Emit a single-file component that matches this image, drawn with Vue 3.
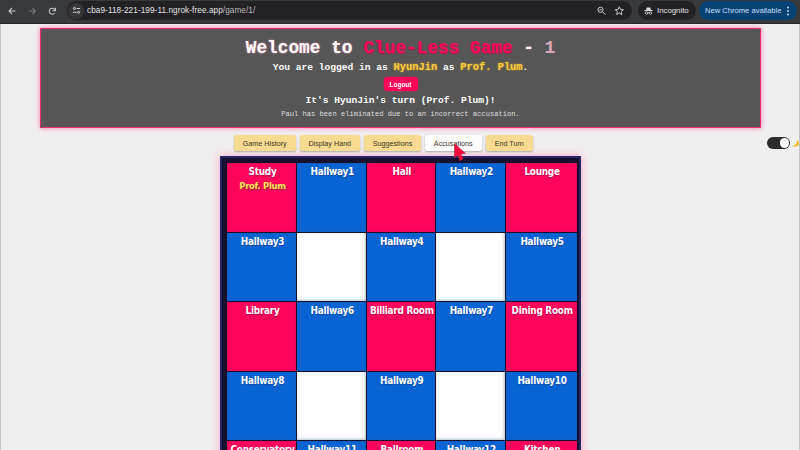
<script setup>
const actions = ['Game History', 'Display Hand', 'Suggestions', 'Accusations', 'End Turn']
const widths = [61.5, 60.5, 57, 56.5, 47.5]
const cells = [
  { n: 'Study', t: 'room', p: 'Prof. Plum' }, { n: 'Hallway1', t: 'hall' }, { n: 'Hall', t: 'room' }, { n: 'Hallway2', t: 'hall' }, { n: 'Lounge', t: 'room' },
  { n: 'Hallway3', t: 'hall' }, { n: '', t: 'blank' }, { n: 'Hallway4', t: 'hall' }, { n: '', t: 'blank' }, { n: 'Hallway5', t: 'hall' },
  { n: 'Library', t: 'room' }, { n: 'Hallway6', t: 'hall' }, { n: 'Billiard Room', t: 'room' }, { n: 'Hallway7', t: 'hall' }, { n: 'Dining Room', t: 'room' },
  { n: 'Hallway8', t: 'hall' }, { n: '', t: 'blank' }, { n: 'Hallway9', t: 'hall' }, { n: '', t: 'blank' }, { n: 'Hallway10', t: 'hall' },
  { n: 'Conservatory', t: 'room' }, { n: 'Hallway11', t: 'hall' }, { n: 'Ballroom', t: 'room' }, { n: 'Hallway12', t: 'hall' }, { n: 'Kitchen', t: 'room' },
]
</script>

<template>
  <div class="window">
    <div class="toolbar">
      <svg class="nav" viewBox="0 0 64 20" fill="none" stroke-width="1.1">
        <path d="M15.500 10H9M12 7l-3 3 3 3" stroke="#c4c5c7" />
        <path d="M29 10h6.500M32.500 7l3 3-3 3" stroke="#77787b" />
        <path d="M55.200 9.500A3 3 0 1 0 54.700 12M55.400 6.800v2.900h-2.900" stroke="#c4c5c7" />
      </svg>
      <div class="address">
        <span class="site">
          <svg viewBox="0 0 10 10" fill="none" stroke="#d5d5d7" stroke-width="1.100">
            <circle cx="2.700" cy="2.800" r="1.100" /><path d="M5 2.800h4M1 7h4" /><circle cx="7.300" cy="7" r="1.100" />
          </svg>
        </span>
        <span class="url">cba9-118-221-199-11.ngrok-free.app<i>/game/1/</i></span>
        <svg class="tools" viewBox="0 0 30 12" fill="none" stroke="#c9cacc">
          <circle cx="4.500" cy="4.800" r="2.600" /><path d="M6.400 6.700l3 3M3.300 4.800h2.400" />
          <path d="M23.300 1.800l1.200 2.600 2.900.3-2.200 1.900.7 2.900-2.600-1.500-2.600 1.500.7-2.900-2.200-1.900 2.900-.3z" />
        </svg>
      </div>
      <div class="incognito">
        <svg viewBox="0 0 10 10" fill="#d9dadc"><path d="M3 1h4l.7 3H9.400v.9H.6V4h1.700z" /><g fill="none" stroke="#d9dadc" stroke-width=".9"><circle cx="2.800" cy="7.200" r="1.400" /><circle cx="7.200" cy="7.200" r="1.400" /><path d="M4.200 7h1.600" /></g></svg>
        <span>Incognito</span>
      </div>
      <div class="update"><span>New Chrome available</span><svg viewBox="0 0 4 10" fill="#d6e6ff"><circle cx="2" cy="1.500" r=".9" /><circle cx="2" cy="5" r=".9" /><circle cx="2" cy="8.500" r=".9" /></svg></div>
    </div>

    <header class="banner">
      <h1>Welcome to <span class="brand">Clue-Less Game</span> - <span class="num">1</span></h1>
      <p class="login">You are logged in as <b>HyunJin</b> as <b>Prof. Plum</b>.</p>
      <button class="logout">Logout</button>
      <p class="turn">It's HyunJin's turn (Prof. Plum)!</p>
      <p class="notice">Paul has been eliminated due to an incorrect accusation.</p>
    </header>

    <div class="controls">
      <button v-for="(a, i) in actions" :key="a" :class="{ active: a === 'Accusations' }" :style="{ width: widths[i] + 'px' }">{{ a }}</button>
      <div class="theme"><span class="switch"></span>
        <svg viewBox="0 0 10 10"><path d="M5.500.8C11 5 6 11 .2 7.800Q4 7.200 4.800 5T5.500.8" fill="#f2c32e" /></svg>
      </div>
      <svg class="cursor" viewBox="0 0 14 19"><path d="M1.500.7v14l3.100-2.500 2.300 5.200 3.300-1.500-2.400-4.800 4.700-.7z" fill="#f5083f" stroke="#b22342" stroke-width=".6" /></svg>
    </div>

    <main class="board">
      <div v-for="(c, i) in cells" :key="i" class="cell" :class="c.t">
        <span>{{ c.n }}</span><span v-if="c.p" class="player">{{ c.p }}</span>
      </div>
    </main>
  </div>
</template>

<style>
html, body { margin: 0; overflow: hidden; background: #f0eff0; }
</style>
<style scoped>
.window { width: 800px; height: 450px; overflow: hidden; position: relative; background: #f0eff0; font-family: "Liberation Sans", Arial, sans-serif; }
.window::before, .window::after { content: ""; position: absolute; z-index: 3; left: 0; top: 24px; bottom: 0; width: 1px; background: repeating-linear-gradient(#b3b3b5 0 1px, #d5d5d6 1px 2px); }
.window::after { left: auto; right: 0; }
.toolbar { height: 24px; box-sizing: border-box; padding-top: 1px; border-bottom: 1px solid #28282a; display: flex; align-items: flex-start; background: #38393b; position: relative; z-index: 2; color: #e3e3e5; }
.nav { width: 64px; height: 20px; flex: none; margin-right: 3px; }
.address { width: 565px; height: 19px; box-sizing: border-box; border-radius: 10px; background: #222123; display: flex; align-items: center; padding-left: 1px; }
.site { width: 16px; height: 16px; border-radius: 50%; background: #363638; display: flex; align-items: center; justify-content: center; }
.site svg { width: 9px; height: 9px; }
.url { margin-left: 3px; font-size: 8.2px; letter-spacing: .08px; white-space: nowrap; width: 320px; }
.url i { font-style: normal; color: #bcbcbe; }
.tools { margin-left: auto; margin-right: 6px; width: 30px; height: 12px; }
.incognito { margin-left: 6px; width: 58px; height: 19px; border-radius: 10px; background: #222123; display: flex; align-items: center; font-size: 7.8px; }
.incognito svg { width: 9px; height: 10px; margin: 0 4px 0 6px; }
.update { margin-left: 3px; width: 98px; height: 19px; border-radius: 10px; background: #084174; color: #c9e0ff; display: flex; align-items: center; font-size: 7.6px; white-space: nowrap; box-sizing: border-box; padding-left: 6px; }
.update span { width: 81px; }
.update svg { width: 4px; height: 10px; }
.banner { width: 721px; height: 100px; margin: 4px 0 0 40px; box-sizing: border-box; border: 1px solid #e82e70; background: #565657; box-shadow: 0 0 5px #ff78ad; text-align: center; color: #fff; font-family: "Liberation Mono", "Courier New", monospace; display: flex; flex-direction: column; align-items: center; }
h1, p { margin: 0; white-space: pre; }
h1 { font-size: 17.8px; line-height: 20px; margin-top: 9px; text-shadow: 0 0 2px #f58caf; }
.brand { color: #f90a58; text-shadow: 1px 1px 1px #af174e; }
.num { color: #dba8ba; text-shadow: none; }
.login { font-size: 9.6px; font-weight: bold; line-height: 12px; margin-top: 4px; }
.login b { font-size: 10.4px; line-height: 10px; color: #f5cd43; text-shadow: 0 0 2px #e79e10; }
.logout { width: 34px; height: 14px; margin-top: 3px; padding: 0; border: 0; border-radius: 4px; background: #ff0459; box-shadow: 0 0 2px #d51c5a; color: #fff; font: bold 6.5px "Liberation Sans", Arial, sans-serif; }
.turn { font-size: 9.6px; font-weight: bold; line-height: 12px; margin-top: 4px; }
.notice { font-size: 7.1px; line-height: 9px; margin-top: 3px; color: #dfdfdf; }
.controls { height: 17px; margin-top: 7px; display: flex; gap: 4px; padding-left: 234px; position: relative; z-index: 2; }
.controls button { height: 16px; padding: 0; border: 0; border-radius: 2px; background: #f6db90; color: #3b3428; font: 7.2px "Liberation Sans", Arial, sans-serif; box-shadow: 0 1px 2px #aaa9a8; white-space: nowrap; }
.controls .active { background: #fdfdfd; }
.theme { margin-left: auto; display: flex; align-items: center; gap: 2px; margin-right: -1px; height: 16px; }
.switch { width: 23px; height: 12px; border-radius: 6px; background: #2b2b2c; display: flex; align-items: center; justify-content: flex-end; box-sizing: border-box; padding-right: 1px; }
.switch::after { content: ""; width: 9.500px; height: 9.500px; border-radius: 50%; background: #fdfdfd; }
.theme svg { width: 9px; height: 9px; }
.cursor { position: absolute; left: 453px; top: 8px; width: 14px; height: 19px; }
.board { width: 361px; height: 363px; margin: 4px 0 0 220px; box-sizing: border-box; border: 2px solid #272563; padding: 5px 3px 5px 5px; background: #15102e; box-shadow: 0 0 8px #ff9ec2; display: grid; grid-template-columns: 69px 68.5px 68.6px 68.5px 71px; grid-auto-rows: 68.6px; gap: 1px; }
.cell { min-width: 0; display: flex; flex-direction: column; align-items: center; color: #fff; font: bold 9.9px/14px "DejaVu Sans Condensed", "DejaVu Sans", sans-serif; font-stretch: condensed; letter-spacing: -.25px; padding: 2px 0 0 2px; box-sizing: border-box; white-space: nowrap; text-shadow: 0 1px 1px rgba(50, 20, 60, .35); }
.cell.room { background: #ff045b; box-shadow: inset 0 0 2px #bb145c; }
.cell.hall { background: #0864d3; box-shadow: inset 0 0 2px #2458a9; }
.cell.blank { background: #fdfdfd; box-shadow: inset -1px -1px 3px #b4c5cd; }
.player { color: #ffe25a; font-size: 9.3px; text-shadow: 1px 1px 1px #8c3438; }
</style>
